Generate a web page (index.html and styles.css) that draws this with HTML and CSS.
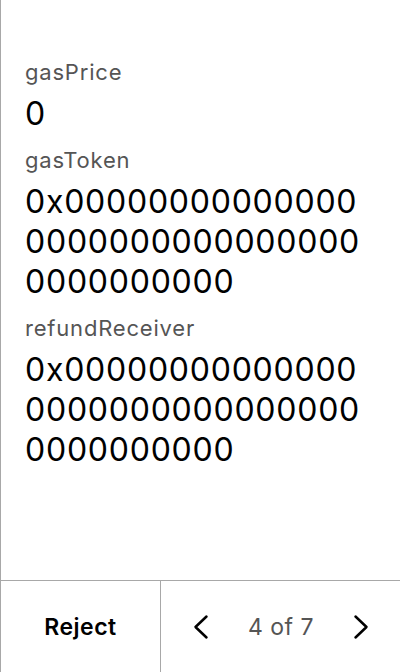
FILE: index.html
```html
<!DOCTYPE html>
<html>
<head>
<meta charset="utf-8">
<link rel="stylesheet" href="styles.css">
</head>
<body>
<div class="screen">
  <div class="content">
    <div class="field">
      <div class="label">gasPrice</div>
      <div class="value">0</div>
    </div>
    <div class="field">
      <div class="label">gasToken</div>
      <div class="value">0x0000000000000000000000000000000000000000</div>
    </div>
    <div class="field">
      <div class="label">refundReceiver</div>
      <div class="value">0x0000000000000000000000000000000000000000</div>
    </div>
  </div>
  <div class="footer">
    <div class="reject">Reject</div>
    <div class="pager">
      <svg class="chev" width="16" height="26" viewBox="0 0 16 26"><path d="M13.5 2.5 L2.5 13 L13.5 23.5" fill="none" stroke="#000" stroke-width="2.5" stroke-linecap="round" stroke-linejoin="round"/></svg>
      <span class="count">4 of 7</span>
      <svg class="chev" width="16" height="26" viewBox="0 0 16 26"><path d="M2.5 2.5 L13.5 13 L2.5 23.5" fill="none" stroke="#000" stroke-width="2.5" stroke-linecap="round" stroke-linejoin="round"/></svg>
    </div>
  </div>
</div>
</body>
</html>
```
FILE: styles.css
```css
html, body { margin: 0; padding: 0; background: #fff; }
body { font-family: Inter, "Noto Sans", sans-serif; color: #000; }
.screen {
  width: 400px; height: 672px; box-sizing: border-box;
  border-left: 1px solid #a8a8a8;
  display: flex; flex-direction: column;
}
.content { flex: 1; padding: 57px 36px 0 24px; }
.field { display: flex; flex-direction: column; margin-bottom: 11px; }
.label { font-size: 22px; line-height: 30px; letter-spacing: 0.8px; color: #555; margin-bottom: 7px; }
.value { font-size: 32px; line-height: 40px; letter-spacing: 0.75px; word-break: break-all; }
.footer {
  height: 92px; border-top: 1px solid #a8a8a8; box-sizing: border-box;
  display: flex;
}
.reject {
  width: 160px; border-right: 1px solid #a8a8a8; box-sizing: border-box;
  display: flex; align-items: center; justify-content: center;
  font-size: 23px; font-weight: 600; letter-spacing: 0.5px;
}
.pager {
  flex: 1; display: flex; align-items: center; justify-content: space-between;
  padding: 0 31px 0 32px;
}
.count { font-size: 23px; color: #555; letter-spacing: 0.5px; }
```
